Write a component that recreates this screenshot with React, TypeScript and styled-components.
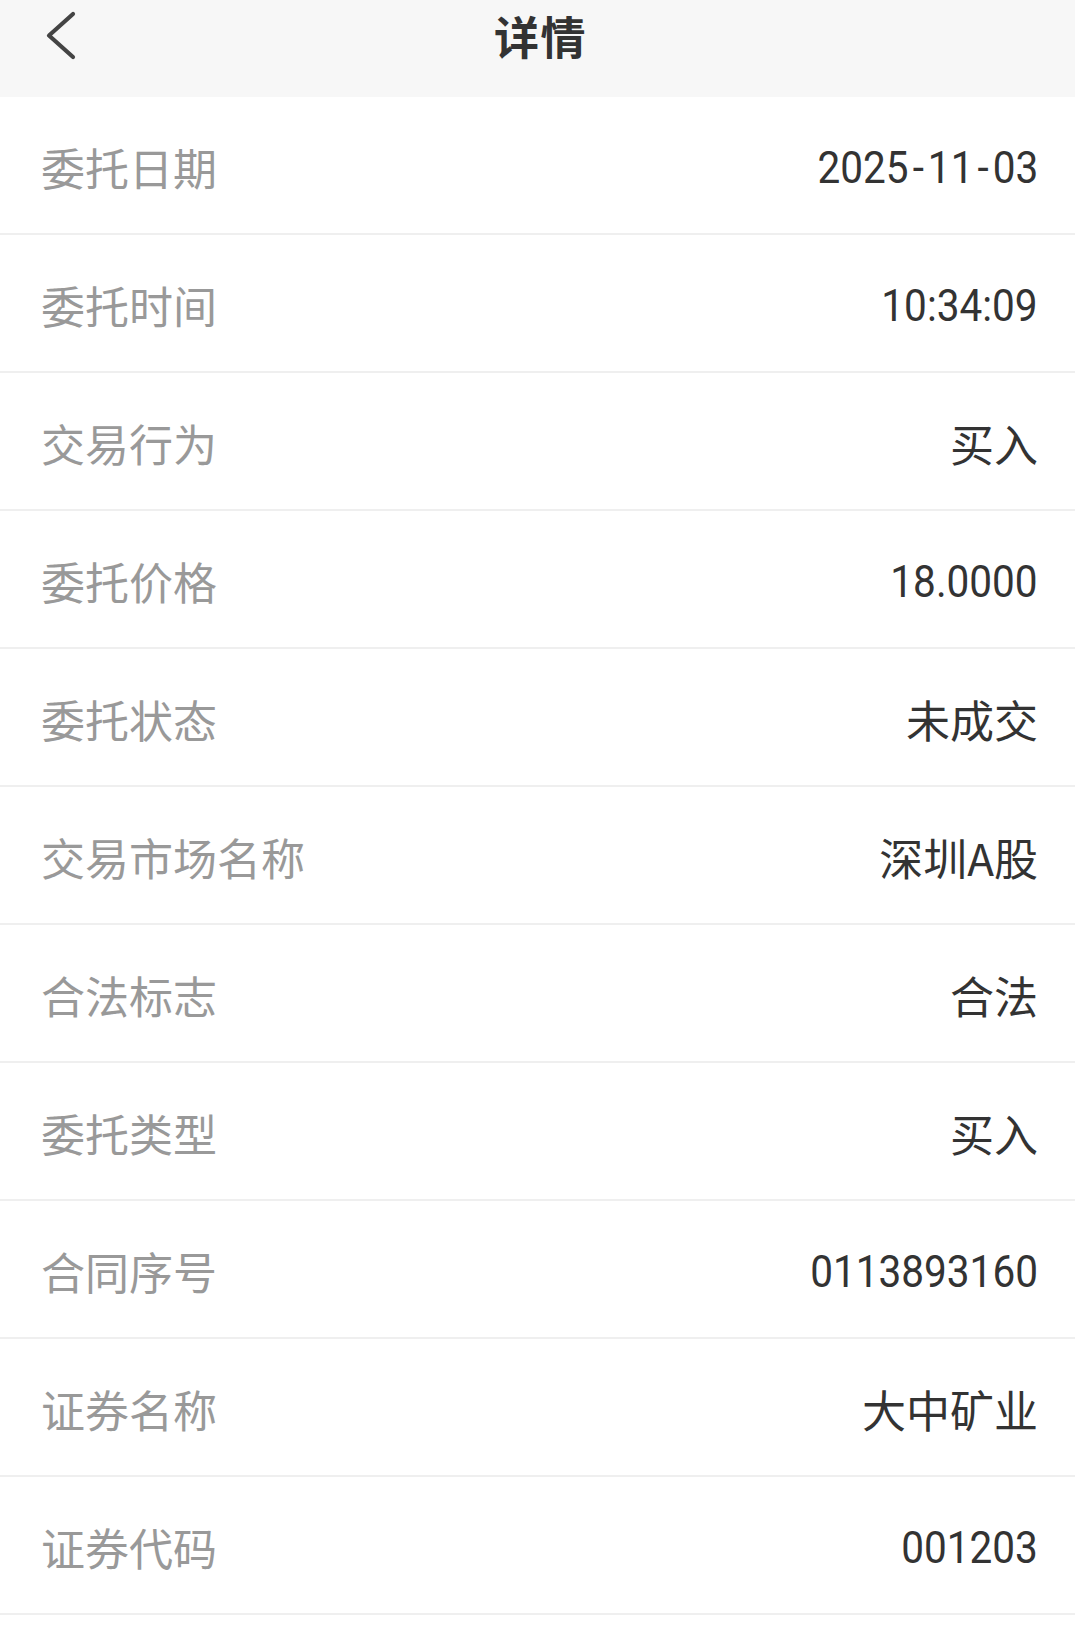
import React from "react";
import styled, { createGlobalStyle } from "styled-components";

const GlobalStyle = createGlobalStyle`
  html, body {
    margin: 0;
    padding: 0;
    background: #ffffff;
  }
  body {
    font-family: "Noto Sans CJK SC", "Noto Sans", sans-serif;
  }
`;

const Page = styled.div`
  width: 1075px;
  min-height: 1626px;
  background: #ffffff;
  display: flex;
  flex-direction: column;
`;

const Header = styled.header`
  height: 97px;
  background: #f7f7f7;
  display: grid;
  grid-template-columns: 1fr auto 1fr;
  align-items: start;
  box-sizing: border-box;
`;

const BackButton = styled.button`
  justify-self: start;
  background: none;
  border: none;
  padding: 11px 0 0 45px;
  margin: 0;
  cursor: pointer;
  display: flex;
`;

const Title = styled.h1`
  margin: 0;
  padding-top: 12px;
  font-family: "Noto Sans CJK SC", sans-serif;
  font-size: 45px;
  line-height: 48px;
  font-weight: 700;
  color: #333333;
  letter-spacing: 1.5px;
  transform: translateX(3px);
`;

const List = styled.div`
  display: flex;
  flex-direction: column;
`;

const Row = styled.div`
  height: 138px;
  box-sizing: border-box;
  border-bottom: 2px solid #efefef;
  display: flex;
  align-items: center;
  justify-content: space-between;
  padding: 4px 37px 0 41px;
`;

const Label = styled.span`
  font-family: "Noto Sans CJK SC", sans-serif;
  font-size: 44px;
  line-height: 1;
  color: #999999;
`;

const TextValue = styled.span`
  font-family: "Noto Sans CJK SC", sans-serif;
  font-size: 44px;
  line-height: 1;
  color: #333333;
`;

const NumValue = styled.span`
  display: inline-block;
  font-family: "Roboto", sans-serif;
  font-weight: 400;
  font-size: 45px;
  line-height: 1;
  color: #333333;
  transform: scaleX(0.9);
  transform-origin: right center;
`;

const Sep = styled.span`
  display: inline-block;
  margin: 0 4.5px;
`;

function renderNumber(v: string) {
  const parts = v.split("-");
  return parts.map((p, i) => (
    <React.Fragment key={i}>
      {i > 0 && <Sep>-</Sep>}
      {p}
    </React.Fragment>
  ));
}

const rows: { label: string; value: string; numeric?: boolean }[] = [
  { label: "委托日期", value: "2025-11-03", numeric: true },
  { label: "委托时间", value: "10:34:09", numeric: true },
  { label: "交易行为", value: "买入" },
  { label: "委托价格", value: "18.0000", numeric: true },
  { label: "委托状态", value: "未成交" },
  { label: "交易市场名称", value: "深圳A股" },
  { label: "合法标志", value: "合法" },
  { label: "委托类型", value: "买入" },
  { label: "合同序号", value: "0113893160", numeric: true },
  { label: "证券名称", value: "大中矿业" },
  { label: "证券代码", value: "001203", numeric: true },
];

export default function App() {
  return (
    <>
      <GlobalStyle />
      <Page>
        <Header>
          <BackButton aria-label="返回">
            <svg width="32" height="50" viewBox="0 0 32 50">
              <polyline
                points="28,3 4,24.5 28,46"
                fill="none"
                stroke="#444444"
                strokeWidth="4.2"
                strokeLinecap="round"
                strokeLinejoin="round"
              />
            </svg>
          </BackButton>
          <Title>详情</Title>
          <div />
        </Header>
        <List>
          {rows.map((r) => (
            <Row key={r.label}>
              <Label>{r.label}</Label>
              {r.numeric ? (
                <NumValue>{renderNumber(r.value)}</NumValue>
              ) : (
                <TextValue>{r.value}</TextValue>
              )}
            </Row>
          ))}
        </List>
      </Page>
    </>
  );
}
